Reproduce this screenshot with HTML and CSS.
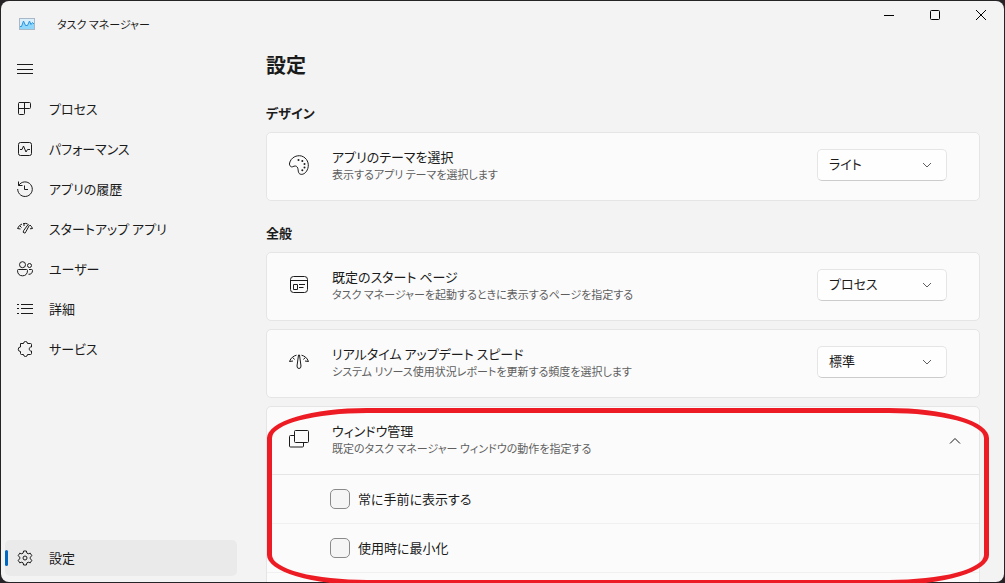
FILE: index.html
```html
<!DOCTYPE html>
<html lang="ja">
<head>
<meta charset="utf-8">
<title>タスク マネージャー</title>
<link rel="stylesheet" href="styles.css">
</head>
<body>
<div class="window">
  <header class="titlebar">
    <svg class="app-icon" width="16" height="12" viewBox="0 0 16 12">
      <rect x=".5" y=".5" width="15" height="11" fill="#d9effb" stroke="#a9b8c6"/>
      <path d="M1 8.500L3 7.500L4.500 3.500L7 7.500L8.500 7L10.500 3.500L12 6L14 5L15 5.500V11H1Z" fill="#8fd6fb" stroke="none"/>
      <path d="M1 8.500H2.500L4.500 3L6.500 7.500H8.500L10.500 3L12 6.500L13.500 4.500L15 6" fill="none" stroke="#2b93e0"/>
    </svg>
    <h1 class="app-title">タスク マネージャー</h1>
    <div class="window-buttons">
      <button class="window-button" aria-label="最小化"><svg width="10" height="10" viewBox="0 0 10 10"><path d="M0 5.500H10"/></svg></button>
      <button class="window-button" aria-label="最大化"><svg width="10" height="10" viewBox="0 0 10 10"><rect x=".5" y=".5" width="9" height="9" rx="1"/></svg></button>
      <button class="window-button" aria-label="閉じる"><svg width="10" height="10" viewBox="0 0 10 10"><path d="M0 0L10 10M10 0L0 10"/></svg></button>
    </div>
  </header>
  <div class="body">
    <nav class="sidebar">
      <button class="nav-item" aria-label="ナビゲーション"><svg class="icon" viewBox="0 0 16 16"><path d="M0 3.500H16M0 8.500H16M0 12.500H16"/></svg></button>
      <a class="nav-item" href="#"><svg class="icon" viewBox="0 0 16 16"><path d="M2 1.500H12.500Q13.500 1.500 13.500 2.500V6.500Q13.500 7.500 12.500 7.500H1.500M2.500 1.500Q1.500 1.500 1.500 2.500V12.500Q1.500 13.500 2.500 13.500H6.500Q7.500 13.500 7.500 12.500V1.500"/></svg>プロセス</a>
      <a class="nav-item" href="#"><svg class="icon" viewBox="0 0 16 16"><rect x="1.500" y="1.500" width="13" height="13" rx="2"/><path d="M3 8.500H5L6.500 5L9 11L10.500 8.500H13"/></svg>パフォーマンス</a>
      <a class="nav-item" href="#"><svg class="icon" viewBox="0 0 16 16"><path d="M1.500 .5V4.500H5.500M1.700 4.500A7.300 7.300 0 1 1 .7 8M7.500 4.500V8.500H11"/></svg>アプリの履歴</a>
      <a class="nav-item" href="#"><svg class="icon" viewBox="0 0 16 16"><path d="M.5 7.500Q2 4 5 3M6 2.700Q8.500 2 10.500 2.800M13 4Q14.800 5.500 15.500 7.500M.5 7.500L3.500 8M13 7.800L15.500 7.500M3 5L4.500 6.500M7 3V5M11.500 3L6.700 9.500Q5.500 11.500 7 12T9 10.500L12.500 4"/></svg>スタートアップ アプリ</a>
      <a class="nav-item" href="#"><svg class="icon" viewBox="0 0 16 16"><circle cx="5.500" cy="3.700" r="3"/><circle cx="12.500" cy="4.500" r="2"/><path d="M1.500 8.500H9.500Q10.500 8.500 10.500 9.500C10.500 13 8.500 14.800 5.500 14.800S.5 13 .5 9.500Q.5 8.500 1.500 8.500ZM12 8.500H14.500Q15.500 8.500 15.500 9.500C15.500 12 14 13.500 11.500 13.300"/></svg>ユーザー</a>
      <a class="nav-item" href="#"><svg class="icon" viewBox="0 0 16 16"><path d="M4 3.500H16M4 7.500H16M4 12.500H16M0 3.500H2M0 7.500H2M0 12.500H2"/></svg>詳細</a>
      <a class="nav-item" href="#"><svg class="icon" viewBox="0 0 16 16"><path d="M3.500 2.500H6.500A2 2 0 0 1 10.500 2.500H13.500Q14.500 2.500 14.500 3.500V6C11.500 5.500 11.500 10.500 14.500 10V12.500Q14.500 13.500 13.500 13.500H10.500A2 2 0 0 1 6.500 13.500H4.500Q3.500 13.500 3.500 12.500V10.500A2.200 2.200 0 0 1 3.500 6Z"/></svg>サービス</a>
      <a class="nav-item nav-settings" href="#" aria-current="page"><svg class="icon" viewBox="0 0 16 16"><circle cx="8" cy="8" r="2"/><path d="M6.600 1H9.400L9.900 3.100L11.200 3.800L13.300 3.200L14.800 5.700L13.300 7.200V8.800L14.800 10.300L13.300 12.800L11.200 12.200L9.900 12.900L9.400 15H6.600L6.100 12.900L4.800 12.200L2.700 12.800L1.200 10.300L2.700 8.800V7.200L1.200 5.700L2.700 3.200L4.800 3.800L6.100 3.100Z" stroke-linejoin="round"/></svg>設定</a>
    </nav>
    <main class="content">
      <h2 class="page-title">設定</h2>
      <section class="group">
        <h3 class="group-title">デザイン</h3>
        <div class="card">
          <div class="setting">
            <svg class="card-icon" viewBox="0 0 20 20"><path d="M.6 8C2 2.500 7.500-.2 12.500 1C18 2.700 20.500 8.500 18.800 13.500C17.600 17.500 14.500 19.800 11.800 19.300C8.800 18.700 9.500 15.500 8.800 13.300C8.200 11.300 6.800 10.600 5 11.200C3.500 11.700 3 12.300 1.800 11.500C.5 10.600.3 9.500.6 8Z"/><g class="dots"><circle cx="9.500" cy="5" r="1"/><circle cx="13.300" cy="6" r="1"/><circle cx="15.500" cy="9" r="1"/><circle cx="15.500" cy="12.500" r="1"/><circle cx="13.300" cy="15.300" r="1"/></g></svg>
            <div class="setting-text"><label class="setting-name" for="theme">アプリのテーマを選択</label><p class="setting-note">表示するアプリ テーマを選択します</p></div>
            <div class="picker"><select id="theme"><option>ライト</option></select><svg class="chevron" viewBox="0 0 10 6"><path d="M1 1L5 5L9 1"/></svg></div>
          </div>
        </div>
      </section>
      <section class="group">
        <h3 class="group-title">全般</h3>
        <div class="card">
          <div class="setting">
            <svg class="card-icon" viewBox="0 0 20 20"><rect x="1.500" y="1.500" width="17" height="16" rx="3"/><path d="M1.500 5.500H18.500M4.500 9.500H8.500V14.500H4.500ZM10 9.500H16M10 12.500H14.500"/></svg>
            <div class="setting-text"><label class="setting-name" for="start">既定のスタート ページ</label><p class="setting-note">タスク マネージャーを起動するときに表示するページを指定する</p></div>
            <div class="picker"><select id="start"><option>プロセス</option></select><svg class="chevron" viewBox="0 0 10 6"><path d="M1 1L5 5L9 1"/></svg></div>
          </div>
        </div>
        <div class="card">
          <div class="setting">
            <svg class="card-icon" viewBox="0 0 20 20"><path d="M.5 9.500C2 5.500 4.500 4 7.500 3.200M12.500 3.200C15.500 4 18 5.500 19.500 9.500M.5 9.500L4 9M16 9L19.500 9.500M3.800 5.500L5.500 7.500M16.200 5.500L14.500 7.500M9.500 3L8 14Q8 16.500 10 16.500T12 14L10.500 3Z"/></svg>
            <div class="setting-text"><label class="setting-name" for="speed">リアルタイム アップデート スピード</label><p class="setting-note">システム リソース使用状況レポートを更新する頻度を選択します</p></div>
            <div class="picker"><select id="speed"><option>標準</option></select><svg class="chevron" viewBox="0 0 10 6"><path d="M1 1L5 5L9 1"/></svg></div>
          </div>
        </div>
        <div class="card">
          <div class="setting">
            <svg class="card-icon" viewBox="0 0 20 20"><rect x="5.500" y="1.500" width="14" height="12" rx="1"/><path d="M5.500 6.500H1.500Q.5 6.500.5 7.500V17Q.5 18 1.500 18H13.500Q14.500 18 14.500 17V13.500"/></svg>
            <div class="setting-text"><span class="setting-name">ウィンドウ管理</span><p class="setting-note">既定のタスク マネージャー ウィンドウの動作を指定する</p></div>
            <button class="collapse" aria-label="折りたたむ" aria-expanded="true"><svg width="12" height="8" viewBox="0 0 12 8"><path d="M1 6.500L6 1.500L11 6.500"/></svg></button>
          </div>
          <label class="option"><input type="checkbox">常に手前に表示する</label>
          <label class="option"><input type="checkbox">使用時に最小化</label>
          <div class="option"></div>
        </div>
      </section>
    </main>
  </div>
</div>
<div class="highlight"></div>
</body>
</html>
```
FILE: styles.css
```css
* { box-sizing: border-box; }

body {
  margin: 0;
  height: 100vh;
  padding: 1px;
  overflow: hidden;
  position: relative;
  background: #252326;
  color: #1b1b1b;
  font: 13px/20px "Noto Sans CJK JP", sans-serif;
  font-feature-settings: "palt";
}

h1, h2, h3, p { margin: 0; }

button, select { font: inherit; color: inherit; font-feature-settings: inherit; }

svg { fill: none; stroke: #1b1b1b; flex: none; }

.window {
  height: 100%;
  display: flex;
  flex-direction: column;
  overflow: hidden;
  border-radius: 8px;
  background: #f3f3f3;
}

.titlebar {
  display: flex;
  align-items: center;
  height: 48px;
  flex: none;
  padding: 0 0 2px 18px;
}

.app-title {
  margin-left: 22px;
  font-size: 11px;
  font-weight: 400;
}

.window-buttons { display: flex; align-self: flex-start; margin-left: auto; }

.window-button {
  display: grid;
  place-items: center;
  width: 46px;
  height: 28px;
  padding: 0;
  border: 0;
  background: none;
}

.window-button svg { stroke: #000; }

.body { display: flex; flex: 1; min-height: 0; }

.sidebar {
  display: flex;
  flex-direction: column;
  gap: 4px;
  width: 240px;
  flex: none;
  padding: 2px 4px 6px;
}

.nav-item {
  display: flex;
  align-items: center;
  gap: 16px;
  height: 36px;
  padding: 0 12px;
  border: 0;
  border-radius: 5px;
  background: none;
  color: inherit;
  text-decoration: none;
  position: relative;
}

.icon { width: 16px; height: 16px; }

.nav-settings { margin-top: auto; background: #eaeaea; }

.nav-settings::before {
  content: "";
  position: absolute;
  left: 0;
  width: 3px;
  height: 16px;
  border-radius: 2px;
  background: #0067c0;
}

.content {
  flex: 1;
  min-width: 0;
  overflow: hidden;
  padding: 2px 24px 0 25px;
}

.page-title {
  padding-bottom: 2px;
  font-size: 20px;
  line-height: 28px;
  font-weight: 700;
}

.group { display: flex; flex-direction: column; gap: 8px; margin-top: 22px; }

.group-title {
  padding-bottom: 1px;
  font-size: 13px;
  line-height: 20px;
  font-weight: 700;
}

.card { border: 1px solid #e5e5e5; border-radius: 5px; background: #fbfbfb; }

.setting {
  display: flex;
  align-items: center;
  height: 67px;
  padding: 0 32px 4px 22px;
}

.card-icon { width: 20px; height: 20px; }

.dots { fill: #1b1b1b; stroke: none; }

.setting-text { flex: 1; margin-left: 23px; }

.setting-name { display: block; line-height: 19px; }

.setting-note { font-size: 11px; line-height: 16px; color: #5f5f5f; }

.picker { display: grid; align-items: center; width: 130px; }

.picker select {
  grid-area: 1 / 1;
  appearance: none;
  height: 32px;
  padding: 0 30px 2px 11px;
  border: 1px solid #e5e5e5;
  border-bottom-color: #cccccc;
  border-radius: 5px;
  background: #fefefe;
}

.chevron {
  grid-area: 1 / 1;
  justify-self: end;
  width: 10px;
  height: 6px;
  margin-right: 15px;
  stroke: #5f5f5f;
  pointer-events: none;
}

.collapse {
  display: grid;
  place-items: center;
  width: 32px;
  height: 32px;
  margin: 4px -24px 0 0;
  padding: 0;
  border: 0;
  background: none;
}

.option {
  display: flex;
  align-items: center;
  gap: 8px;
  height: 49px;
  padding-left: 63px;
  border-top: 1px solid #f0f0f0;
}

.setting + .option { border-top-color: #e5e5e5; }

.option input {
  appearance: none;
  width: 20px;
  height: 20px;
  margin: 0;
  border: 1px solid #8a8a8a;
  border-radius: 5px;
  background: #f5f5f5;
}

.highlight {
  position: absolute;
  inset: 408px 16px -2px 267px;
  border: 5px solid #ed1c24;
  border-radius: 100px / 30px;
  pointer-events: none;
}
```
